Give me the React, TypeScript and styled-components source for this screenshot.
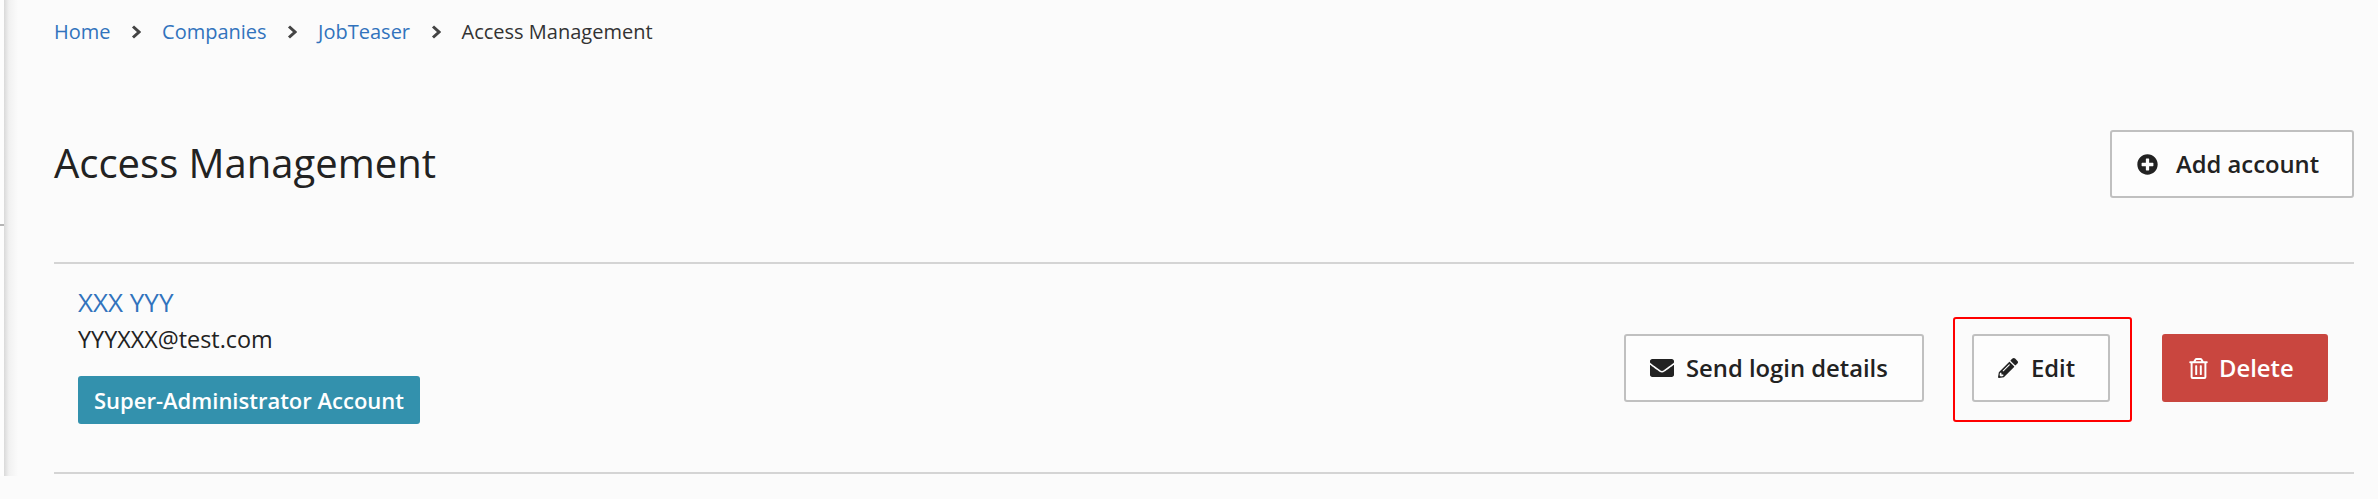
import React from "react";
import styled, { createGlobalStyle } from "styled-components";
import { FaEnvelope, FaPencilAlt, FaPlusCircle, FaRegTrashAlt } from "react-icons/fa";

const Global = createGlobalStyle`
  html, body { margin: 0; padding: 0; background: #fbfbfb; }
  body { font-family: "Open Sans", "Noto Sans", sans-serif; color: #222; overflow: hidden; }
`;

const Shell = styled.div`
  display: flex;
  width: 2378px;
  height: 499px;
  align-items: flex-start;
  background: #fbfbfb;
`;

const Rail = styled.div`
  width: 4px;
  height: 476px;
  background: #fdfdfd;
  position: relative;
  &::after {
    content: "";
    position: absolute;
    left: 0;
    top: 224px;
    width: 4px;
    height: 2px;
    background: #b4b4b4;
  }
`;

const Page = styled.main`
  flex: 1;
  height: 476px;
  box-sizing: border-box;
  padding: 0 24px 0 50px;
  background: linear-gradient(to right, #d9d9d9 0, #f1f1f1 5px, #fbfbfb 14px, #fbfbfb 100%);
`;

const Crumbs = styled.nav`
  display: flex;
  align-items: center;
  height: 24px;
  margin-top: 20px;
  font-size: 20px;
  line-height: 24px;
`;

const Crumb = styled.a`
  color: #3173bd;
  text-decoration: none;
`;

const Current = styled.span`
  color: #333;
`;

const Sep = styled.span`
  display: flex;
  width: 51.5px;
  justify-content: center;
  color: #444;
`;

const Head = styled.header`
  display: flex;
  justify-content: space-between;
  align-items: center;
  margin-top: 86px;
  height: 68px;
`;

const Title = styled.h1`
  margin: 0 0 2px;
  font-size: 40px;
  font-weight: 400;
  line-height: 54px;
  color: #222;
`;

const Button = styled.button<{ $w: number; $pad?: number; $gap?: number }>`
  display: flex;
  align-items: center;
  justify-content: flex-start;
  width: ${(p) => p.$w}px;
  height: 68px;
  box-sizing: border-box;
  padding: 0 0 0 ${(p) => p.$pad ?? 24}px;
  border: 2px solid #c0c0c0;
  border-radius: 3px;
  background: #fdfdfd;
  color: #222;
  font: 600 23.8px/30px "Open Sans", sans-serif;
  gap: ${(p) => p.$gap ?? 13}px;
`;

const DangerButton = styled(Button)`
  background: #c9463f;
  border-color: #c9463f;
  color: #fff;
`;

const Row = styled.section`
  display: flex;
  align-items: center;
  justify-content: space-between;
  height: 212px;
  margin-top: 64px;
  box-sizing: border-box;
  border-top: 2px solid #d4d4d4;
  border-bottom: 2px solid #d4d4d4;
  padding: 0 26px 0 24px;
`;

const Info = styled.div`
  display: flex;
  flex-direction: column;
  align-items: flex-start;
  align-self: flex-start;
  padding-top: 20px;
`;

const Name = styled.a`
  color: #3173bd;
  font-size: 26px;
  line-height: 36px;
  text-decoration: none;
`;

const Email = styled.div`
  font-size: 23.4px;
  line-height: 36px;
  margin-top: 1px;
  color: #222;
`;

const Badge = styled.span`
  display: inline-block;
  margin-top: 19px;
  height: 48px;
  line-height: 48px;
  padding: 0 16px;
  border-radius: 3px;
  background: #3391ad;
  color: #fff;
  font-size: 22px;
  font-weight: 600;
`;

const Actions = styled.div`
  display: flex;
  align-items: center;
`;

const EditWrap = styled.div`
  position: relative;
  margin: 0 52px 0 48px;
`;

const Highlight = styled.div`
  position: absolute;
  left: -19px;
  top: -17px;
  right: -22px;
  bottom: -20px;
  border: 2.5px solid #f00;
  border-radius: 3px;
  pointer-events: none;
`;

const Chevron = () => (
  <svg width="10" height="14" viewBox="0 0 10 14" aria-hidden="true">
    <polyline points="2,1.5 8,7 2,12.5" fill="none" stroke="currentColor" strokeWidth="3" />
  </svg>
);

export default function App() {
  return (
    <>
      <Global />
      <Shell>
        <Rail />
        <Page>
          <Crumbs>
            <Crumb href="#">Home</Crumb>
            <Sep><Chevron /></Sep>
            <Crumb href="#">Companies</Crumb>
            <Sep><Chevron /></Sep>
            <Crumb href="#">JobTeaser</Crumb>
            <Sep><Chevron /></Sep>
            <Current>Access Management</Current>
          </Crumbs>
          <Head>
            <Title>Access Management</Title>
            <Button $w={244} $pad={25} $gap={18}><FaPlusCircle size={21} />Add account</Button>
          </Head>
          <Row>
            <Info>
              <Name href="#">XXX YYY</Name>
              <Email>YYYXXX@test.com</Email>
              <Badge>Super-Administrator Account</Badge>
            </Info>
            <Actions>
              <Button $w={300} $gap={12}><FaEnvelope size={24} />Send login details</Button>
              <EditWrap>
                <Button $w={138} $gap={13}><FaPencilAlt size={20} />Edit</Button>
                <Highlight />
              </EditWrap>
              <DangerButton $w={166} $gap={10}><FaRegTrashAlt size={21} />Delete</DangerButton>
            </Actions>
          </Row>
        </Page>
      </Shell>
    </>
  );
}
